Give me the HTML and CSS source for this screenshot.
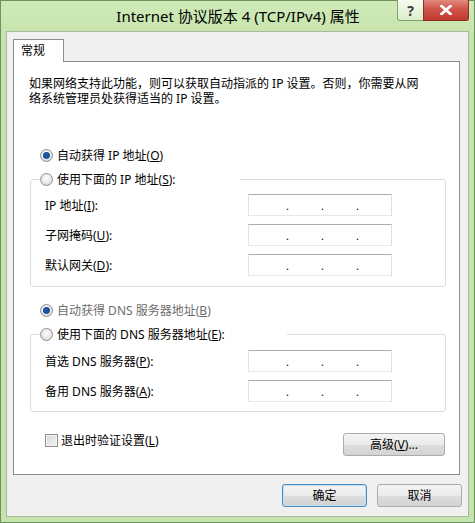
FILE: index.html
```html
<!DOCTYPE html>
<html lang="zh-CN">
<head>
    <meta charset="UTF-8">
    <title>Internet 协议版本 4 (TCP/IPv4) 属性</title>
    <link rel="stylesheet" href="styles.css">
</head>
<body>
    <div class="window">
        <div class="titlebar">
            <span class="title">Internet 协议版本 4 (TCP/IPv4) 属性</span>
            <div class="caption">
                <span class="cap help">?</span>
                <span class="cap close">
                    <svg width="12" height="10" viewBox="0 0 12 10"><path d="M1.5 1 L10.5 9 M10.5 1 L1.5 9" stroke="#fff" stroke-width="2.8" stroke-linecap="square"/></svg>
                </span>
            </div>
        </div>

        <div class="client">
            <div class="tabs"><span class="tab">常规</span></div>

            <div class="panel">
                <p class="intro">如果网络支持此功能，则可以获取自动指派的 IP 设置。否则，你需要从网络系统管理员处获得适当的 IP 设置。</p>

                <div class="option first"><span class="radio checked"></span>自动获得 IP 地址(<u>O</u>)</div>
                <fieldset class="group">
                    <legend class="option legend-ip"><span class="radio"></span>使用下面的 IP 地址(<u>S</u>):</legend>
                    <div class="field-row"><span class="label">IP 地址(<u>I</u>):</span><span class="ip"><span>.</span><span>.</span><span>.</span></span></div>
                    <div class="field-row"><span class="label">子网掩码(<u>U</u>):</span><span class="ip"><span>.</span><span>.</span><span>.</span></span></div>
                    <div class="field-row"><span class="label">默认网关(<u>D</u>):</span><span class="ip"><span>.</span><span>.</span><span>.</span></span></div>
                </fieldset>

                <div class="option dns-auto"><span class="radio checked"></span>自动获得 DNS 服务器地址(<u>B</u>)</div>
                <fieldset class="group dns">
                    <legend class="option legend-dns"><span class="radio"></span>使用下面的 DNS 服务器地址(<u>E</u>):</legend>
                    <div class="field-row"><span class="label">首选 DNS 服务器(<u>P</u>):</span><span class="ip"><span>.</span><span>.</span><span>.</span></span></div>
                    <div class="field-row"><span class="label">备用 DNS 服务器(<u>A</u>):</span><span class="ip"><span>.</span><span>.</span><span>.</span></span></div>
                </fieldset>

                <div class="bottom-row">
                    <div class="check-option"><span class="checkbox"></span>退出时验证设置(<u>L</u>)</div>
                    <button class="btn adv">高级(<u>V</u>)...</button>
                </div>
            </div>

            <div class="footer">
                <button class="btn default">确定</button>
                <button class="btn">取消</button>
            </div>
        </div>
    </div>
</body>
</html>
```

FILE: styles.css
```css
body{margin: 0; font: 12px/15px "Noto Sans", "Noto Sans CJK SC", sans-serif; color: #000; background: #fff;}

.window{position: relative; width: 475px; height: 523px; box-sizing: border-box; border: 1px solid #6f9260; background: linear-gradient(#cfeab8, #c5e3aa 40px); display: flex; flex-direction: column;}

/* title bar */
.titlebar{height: 30px; display: flex; align-items: center; justify-content: center;}
.title{font-size: 15px; line-height: 20px; padding-left: 1px;}
.caption{position: absolute; top: -1px; right: 5px; display: flex;}
.cap{height: 21px; box-sizing: border-box; border: 1px solid #82a070; border-top: none; display: flex; align-items: center; justify-content: center;}
.help{width: 27px; border-radius: 0 0 0 3px; background: linear-gradient(#f6fbf1, #dcefcb); color: #3b3b3b; font-weight: bold; font-size: 14px;}
.close{width: 46px; margin-left: -1px; border-color: #8b2f27; border-radius: 0 0 3px 0; background: linear-gradient(#e2897e, #cf5448 45%, #c23a2f);}

/* client area */
.client{flex: 1; margin: 0 5px 5px; background: #f0f0f0; border: 1px solid #a9b8a0; padding: 7px 6px 0; display: flex; flex-direction: column;}
.tabs{display: flex; height: 22px;}
.tab{position: relative; z-index: 1; width: 51px; height: 23px; box-sizing: border-box; border: 1px solid #898c95; border-bottom: none; background: #fff; padding-left: 7px; line-height: 21px;}
.panel{height: 414px; box-sizing: border-box; margin-right: 2px; border: 1px solid #898c95; background: #fff; padding: 14px 14px 0 15px;}

.intro{margin: 0; width: 398px;}

.option{display: flex; align-items: center; height: 15px; margin-left: 11px;}
.option.first{margin-top: 42px;}
.option.dns-auto{margin-top: 16px; color: #6d6d6d;}

.radio{position: relative; width: 13px; height: 13px; box-sizing: border-box; border: 1px solid #8f8f8f; border-radius: 50%; margin-right: 4px; background: radial-gradient(circle at 50% 40%, #ffffff, #e4e4e4 60%, #d2d2d2);}
.radio.checked::after{content: ""; position: absolute; left: 2px; top: 2px; width: 7px; height: 7px; border-radius: 50%; background: radial-gradient(circle at 45% 40%, #1f5fb3, #164a93 55%, #7fb2e6);}

/* group boxes */
.group{margin: 9px 0 0 1px; width: 416px; box-sizing: border-box; border: 1px solid #dcdcdc; border-radius: 3px; padding: 7px 13px 10px 9px; min-width: 0;}
.group.dns{padding: 8px 13px 9px 9px;}
.group legend{padding: 0; margin: 0;}
.legend-ip{width: 200px;}
.legend-dns{width: 247px;}

.field-row{display: flex; align-items: center; height: 22px; padding-left: 5px;}
.field-row + .field-row{margin-top: 8px;}
.label{width: 203px;}
.ip{width: 144px; height: 22px; box-sizing: border-box; border: 1px solid; border-color: #abadb3 #dbdfe6 #e3e9ef #e2e3ea; background: #fff; display: flex; align-items: center; padding-left: 21px;}
.ip span{width: 35px; text-align: center; font-size: 11px;}

/* bottom row */
.bottom-row{display: flex; justify-content: space-between; align-items: flex-start; margin-top: 21px; padding-left: 16px;}
.check-option{display: flex; align-items: center; height: 15px;}
.checkbox{width: 13px; height: 13px; box-sizing: border-box; border: 1px solid #8f8f8f; margin-right: 3px; background: linear-gradient(135deg, #d6d6d6, #f3f3f3); box-shadow: inset 0 0 0 1px #f4f4f4;}

.btn{font: inherit; color: #000; height: 23px; box-sizing: border-box; padding: 0; border: 1px solid #acacac; border-radius: 3px; background: linear-gradient(#f4f4f4, #ebebeb 50%, #dddddd 51%, #d3d3d3); cursor: pointer;}
.adv{width: 102px;}
.default{border-color: #4a8cc4; box-shadow: inset 0 0 0 1px #bfe2f8;}

.footer{display: flex; justify-content: flex-end; gap: 10px; margin-top: 9px;}
.footer .btn{width: 85px;}
```
